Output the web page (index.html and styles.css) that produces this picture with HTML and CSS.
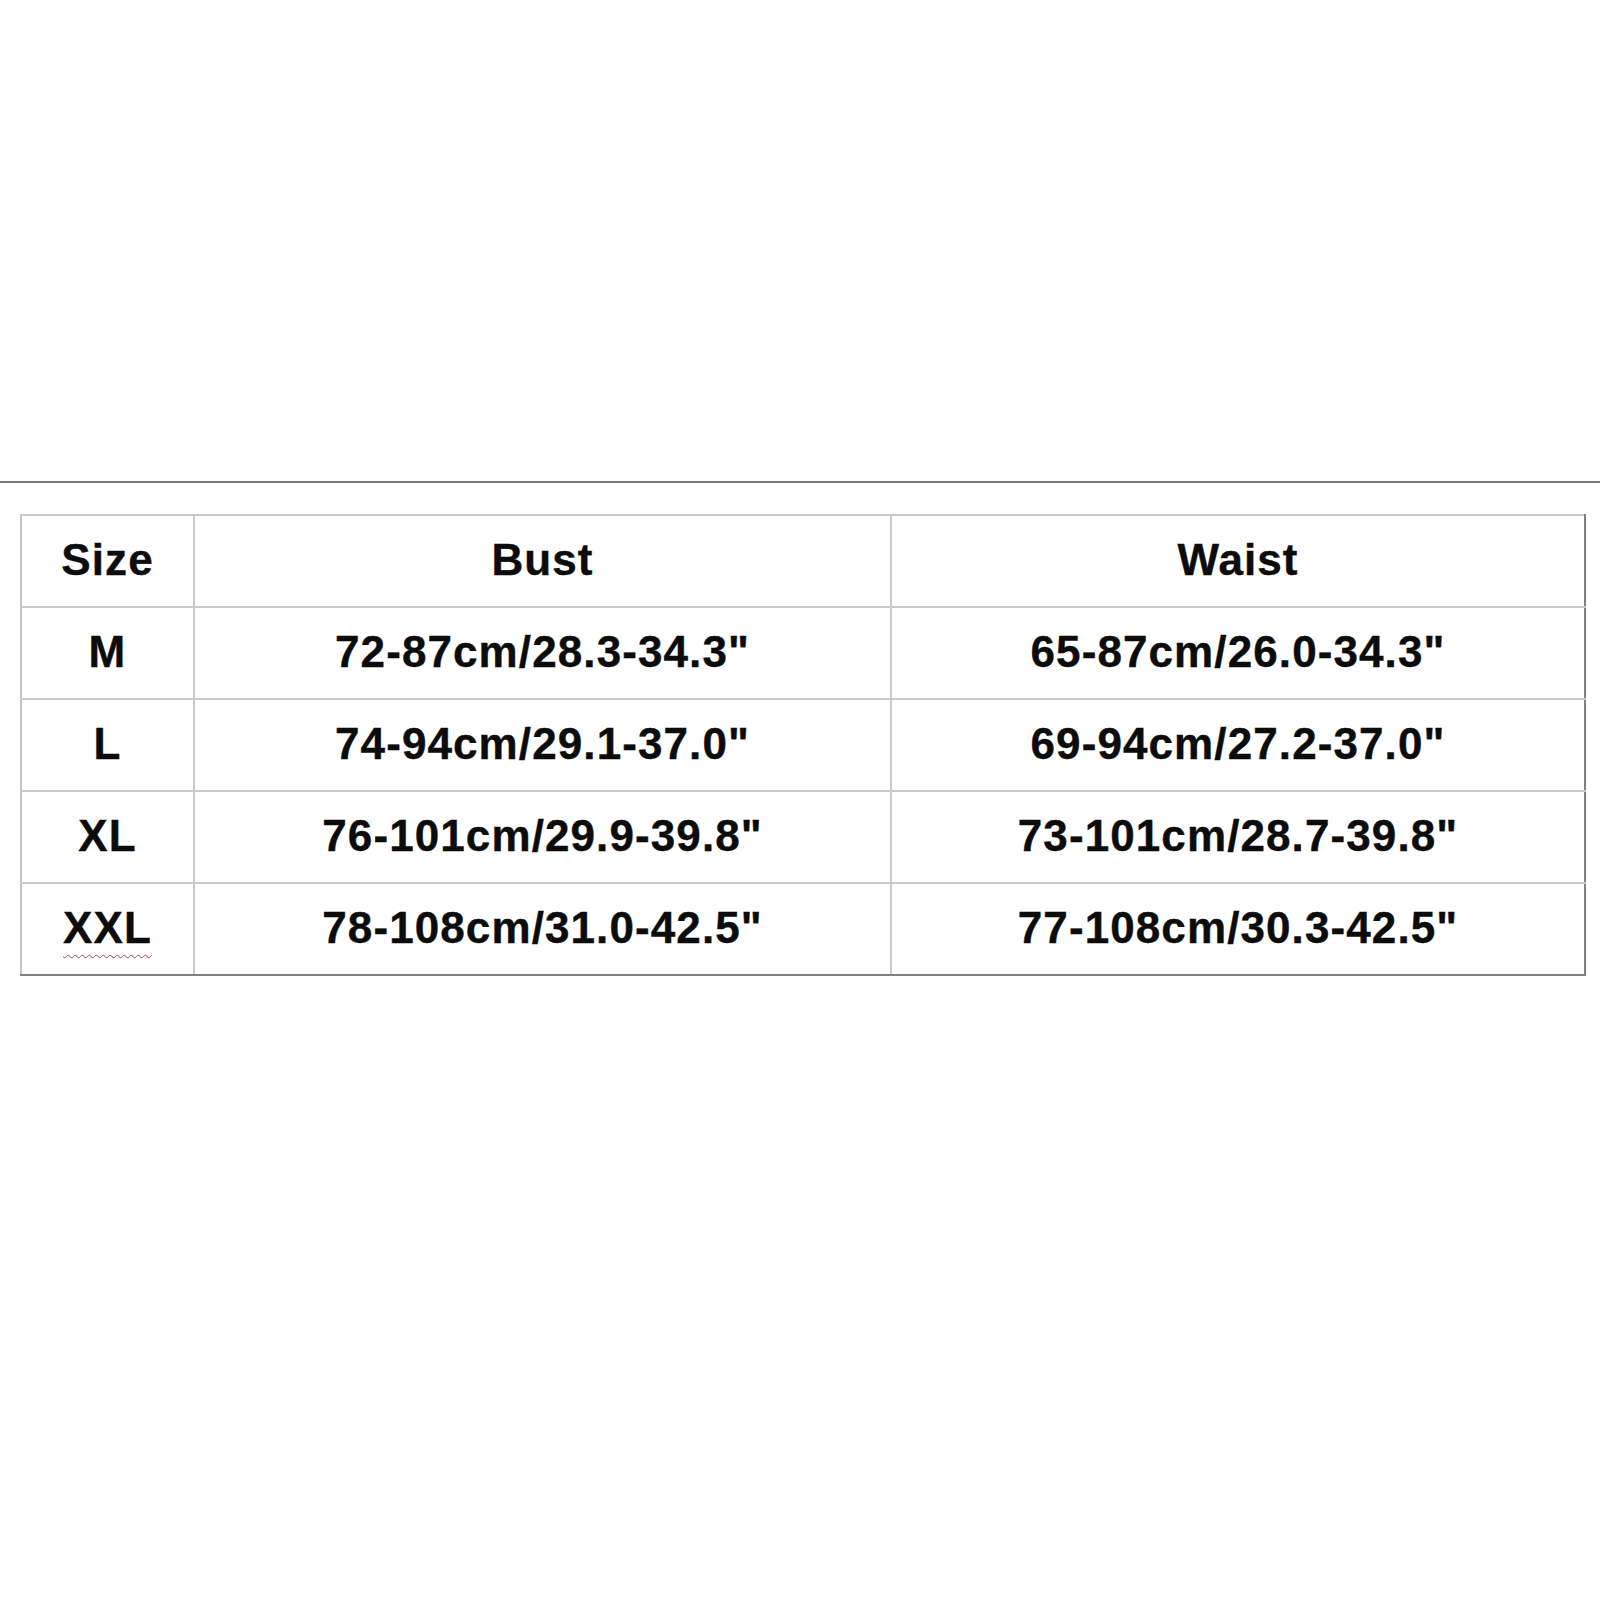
FILE: index.html
```html
<!DOCTYPE html>
<html>
<head>
<meta charset="utf-8">
<link rel="stylesheet" href="styles.css">
</head>
<body>
<div class="page">
  <div class="rule"></div>
  <table class="sizes">
    <colgroup>
      <col class="c-size">
      <col class="c-bust">
      <col class="c-waist">
    </colgroup>
    <tr>
      <td>Size</td>
      <td>Bust</td>
      <td>Waist</td>
    </tr>
    <tr>
      <td>M</td>
      <td>72-87cm/28.3-34.3"</td>
      <td>65-87cm/26.0-34.3"</td>
    </tr>
    <tr>
      <td>L</td>
      <td>74-94cm/29.1-37.0"</td>
      <td>69-94cm/27.2-37.0"</td>
    </tr>
    <tr>
      <td>XL</td>
      <td>76-101cm/29.9-39.8"</td>
      <td>73-101cm/28.7-39.8"</td>
    </tr>
    <tr>
      <td><span class="spell">XXL</span></td>
      <td>78-108cm/31.0-42.5"</td>
      <td>77-108cm/30.3-42.5"</td>
    </tr>
  </table>
</div>
</body>
</html>
```

FILE: styles.css
```css
html, body {
  margin: 0;
  padding: 0;
  background: #ffffff;
}

.page {
  width: 1600px;
  height: 1600px;
  padding-top: 481px;
  box-sizing: border-box;
}

.rule {
  height: 2px;
  background: #7c7c7c;
}

.sizes {
  margin: 31px 0 0 20px;
  width: 1564px;
  table-layout: fixed;
  border-collapse: collapse;
  border-top: 2px solid #cbcbcb;
  border-left: 2px solid #c4c4c4;
  border-right: 2px solid #808080;
  border-bottom: 2px solid #808080;
}

.c-size { width: 173px; }
.c-bust { width: 697px; }
.c-waist { width: 694px; }

.sizes tr {
  height: 92px;
}

.sizes td {
  padding: 0 0 2px 0;
  border: 2px solid #cacaca;
  text-align: center;
  vertical-align: middle;
  font-family: "Liberation Sans", Arial, sans-serif;
  font-weight: bold;
  font-size: 44px;
  letter-spacing: 1.1px;
  color: #0c0c0c;
  line-height: 1;
  -webkit-text-stroke: 0.4px #0c0c0c;
}

.sizes tr:first-child td { border-top-color: #cbcbcb; }
.sizes tr:last-child td { border-bottom-color: #808080; }
.sizes td:first-child { border-left-color: #c4c4c4; }
.sizes td:last-child { border-right-color: #808080; }

.spell {
  text-decoration: underline wavy #a84848;
  text-decoration-thickness: 1px;
  text-underline-offset: 11px;
}
```
